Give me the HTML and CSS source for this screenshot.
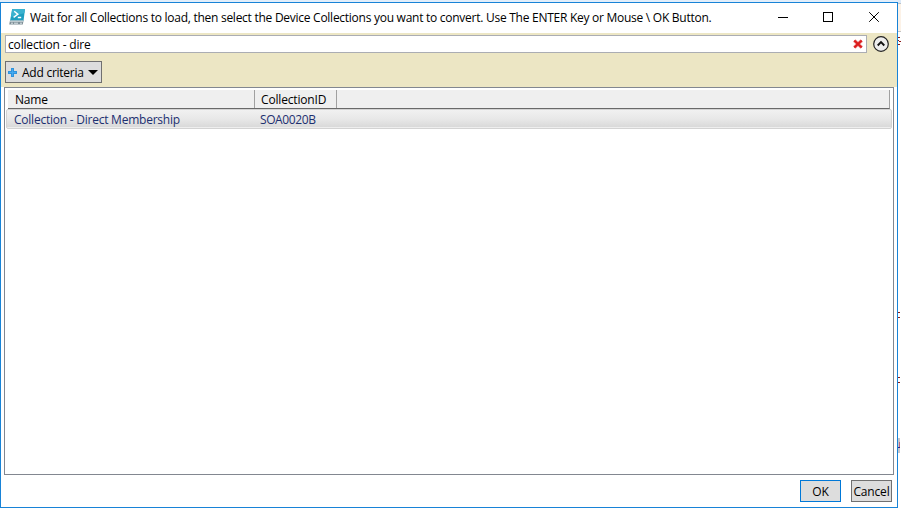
FILE: index.html
```
<!DOCTYPE html>
<html lang="en">
<head>
<meta charset="utf-8">
<title>Device Collections</title>
<link rel="stylesheet" href="styles.css">
</head>
<body>
<div class="desktop">
  <main class="window">
    <header class="titlebar">
      <svg class="app-icon" width="16" height="16" viewBox="0 0 16 16">
        <path d="M3.2 0H16L14.500 12H1z" fill="#1f9fc0"/>
        <path d="M3.2 0H16L15.4 4 2 8z" fill="#3bb2cf"/>
        <path d="M1 11.500H14.600L13.800 15.500H.2z" fill="#7f8f97"/>
        <path d="M1.2 11.500H14.500L14.300 12.700H1z" fill="#d3dde0"/>
        <path d="M2 14.200h2M5 14.200h4M11 14.200h2" stroke="#dfe8ea"/>
        <path d="M5.200 2.200L8.800 5.300 4.600 8.400M8.800 8.400h3.400" fill="none" stroke="#fff" stroke-width="1.5"/>
      </svg>
      <h1 class="title">Wait for all Collections to load, then select the Device Collections you want to convert. Use The ENTER Key or Mouse \ OK Button.</h1>
      <svg class="caption" width="98" height="12" viewBox="0 0 98 12" fill="none" stroke="#000">
        <path d="M0 6.5h10M45.5 1.5h9v9h-9z" shape-rendering="crispEdges"/>
        <path d="M91.2 1.2l9.6 9.6M100.800 1.200l-9.600 9.600"/>
      </svg>
    </header>
    <section class="filter">
      <div class="search-row">
        <div class="search"><span class="query">collection - dire</span>
          <svg class="clear" width="10" height="10" viewBox="0 0 10 10"><path d="M1.300 1.500l7.400 7M8.700 1.500l-7.400 7" stroke="#eda0a0" stroke-width="3.600"/><path d="M1.300 1.500l7.400 7M8.700 1.500l-7.400 7" stroke="#dc1c1c" stroke-width="2.200"/></svg>
        </div>
        <svg class="expander" width="16" height="16" viewBox="0 0 16 16" fill="none"><circle cx="8" cy="8" r="7.300" fill="#eee" stroke="#222" stroke-width="1.200"/><path d="M4.700 9.500L8 6.200l3.300 3.300" stroke="#111" stroke-width="1.900"/></svg>
      </div>
      <div class="criteria">
        <svg width="9" height="9" viewBox="0 0 9 9"><path d="M3 0h3v3h3v3H6v3H3V6H0V3h3z" fill="#3093dc"/><path d="M4 1h1v3h3v1H5v3H4V5H1V4h3z" fill="#45aaf0"/></svg>
        <span class="criteria-text">Add criteria</span>
        <svg width="10" height="5" viewBox="0 0 10 5"><path d="M0 0h10L5 5z" fill="#000"/></svg>
      </div>
    </section>
    <section class="list">
      <div class="head"><span class="col name">Name</span><span class="col id">CollectionID</span></div>
      <div class="row"><span class="cell cell-name">Collection - Direct Membership</span><span class="cell cell-id">SOA0020B</span></div>
    </section>
    <footer class="actions"><div class="button ok">OK</div><div class="button cancel">Cancel</div></footer>
  </main>
  <svg class="behind" width="3" height="509" viewBox="0 0 3 509" shape-rendering="crispEdges">
    <path d="M0 0h3v3H0z" fill="#dbe9f8"/><path d="M0 3h3v1H0z" fill="#b9c3cc"/><path d="M0 4h3v27H0z" fill="#fcf2e7"/><path d="M0 31h3v1H0z" fill="#c4c4c4"/>
    <path d="M0 37h2v1H0zM0 40h1v1H0zM1 41h2v1H1zM0 44h2v1H0zM0 312h2v1H0zM0 317h2v1H0zM0 377h2v1H0zM0 382h2v1H0z" fill="#8b1a1a"/>
    <path d="M0 438h2v15H0z" fill="#c6c6cc"/><path d="M1 442h1v5H1z" fill="#b66b86"/><path d="M0 447h2v1H0z" fill="#302090"/>
  </svg>
</div>
</body>
</html>
```
FILE: styles.css
```
* { box-sizing: border-box; }
body { margin: 0; background: #fff; font: 12px/16px "Open Sans", "Noto Sans", sans-serif; letter-spacing: -.17px; color: #000; overflow: hidden; }
svg { display: block; flex: none; }
.desktop { display: flex; width: 901px; height: 509px; background: linear-gradient(#e2eefa 0 2px, #fff 2px); }
.window { display: flex; flex-direction: column; width: 898px; height: 506px; margin-top: 2px; border: 1px solid #1883d7; background: #fff; }
.titlebar { display: flex; align-items: flex-start; height: 30px; padding-left: 8px; }
.app-icon { margin-top: 6px; }
.title { width: 748px; margin: 7px 0 0 5px; font-size: 12px; font-weight: 400; line-height: 16px; white-space: nowrap; letter-spacing: -.265px; }
.caption { margin-top: 8px; overflow: visible; }
.filter { height: 54px; padding: 2px 0 0 4px; background: #ece6c4; }
.search-row { display: flex; height: 18px; align-items: center; }
.search { display: flex; justify-content: space-between; align-items: center; width: 862px; height: 18px; padding: 0 3px 0 2px; border: 1px solid #abadb3; background: #fff; white-space: nowrap; }
.query { padding-top: 2px; }
.expander { margin-left: 6px; }
.criteria { display: flex; align-items: center; width: 97px; height: 22px; margin-top: 8px; padding-left: 2px; border: 1px solid #707070; background: #ddd; white-space: nowrap; }
.criteria-text { width: 71px; padding: 2px 0 0 5px; letter-spacing: -.25px; }
.list { width: 890px; height: 388px; margin-left: 3px; padding: 2px 1px 0; border: 1px solid #828790; }
.head { display: flex; width: 882px; height: 19px; margin-left: 2px; border-right: 1px solid #a0a0a0; border-bottom: 1px solid #696969; background: #efefef; }
.col { border-right: 1px solid #a0a0a0; line-height: 20px; white-space: nowrap; }
.name { width: 247px; padding-left: 7px; }
.id { width: 82px; padding-left: 6px; }
.row { display: flex; width: 886px; height: 20px; border: 1px solid #d3d3d3; border-radius: 2px; background: linear-gradient(#f1f1f1, #e8e8e8 50%, #dadada 92%, #eee 92%); color: #1c2f70; line-height: 20px; white-space: nowrap; letter-spacing: -.235px; }
.cell-name { width: 247px; padding-left: 7px; }
.cell-id { padding-left: 6px; letter-spacing: -.4px; }
.actions { display: flex; gap: 10px; padding: 5px 0 0 799px; }
.button { width: 41px; height: 22px; border: 1px solid #707070; background: #ddd; text-align: center; line-height: 22px; white-space: nowrap; }
.ok { border-color: #0078d7; }
```
